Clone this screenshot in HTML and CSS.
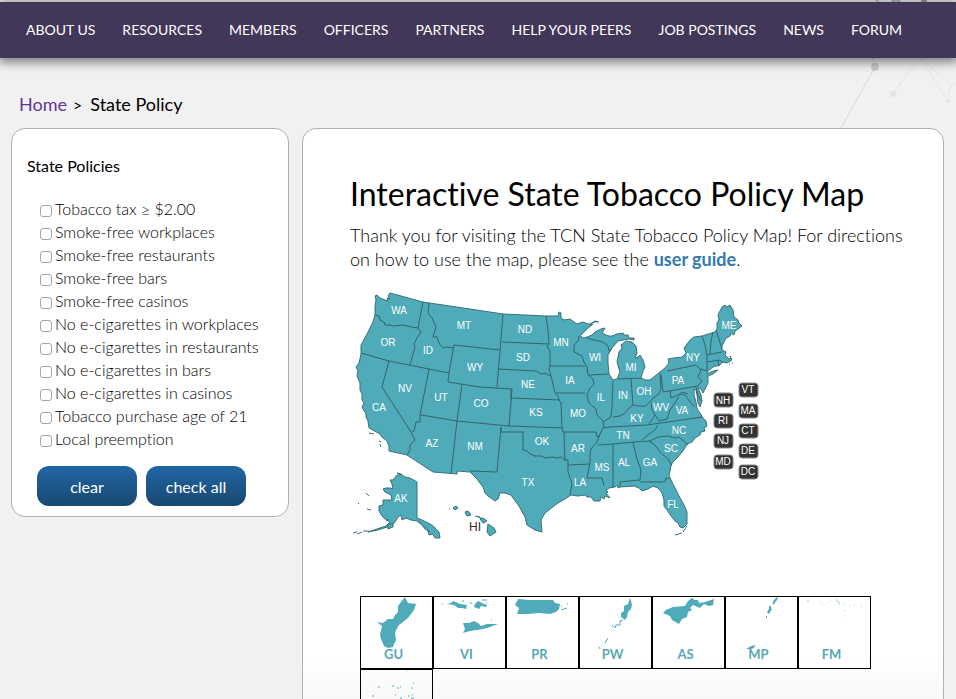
FILE: index.html
```html
<!DOCTYPE html>
<html lang="en">
<head>
<meta charset="utf-8">
<title>State Policy</title>
<link rel="stylesheet" href="styles.css">
</head>
<body>
<svg class="network" viewBox="0 0 120 130" width="120" height="130" aria-hidden="true">
  <g fill="none" stroke="#e6e6e8"><path d="M36 56 39 67 5 128" stroke="#dadadc"/><path d="M84 57 57 94M84 57 116 86M84 57 112 101"/><path d="M120 83Q112 86 112 96"/></g>
  <circle cx="39" cy="67" r="4" fill="#c9c9cd"/><circle cx="57" cy="94" r="3" fill="#dfe4e4"/><circle cx="112" cy="101" r="2" fill="#e4e4e4"/>
  <circle cx="60" cy="-1" r="5" fill="#a9c3cc"/><circle cx="88" cy="0" r="3" fill="#999"/><path d="M0 0l-6 0M40 0l3 2" stroke="#99a"/>
</svg>
<nav class="nav" aria-label="Main">
  <a href="#">ABOUT US</a><a href="#">RESOURCES</a><a href="#">MEMBERS</a><a href="#">OFFICERS</a><a href="#">PARTNERS</a><a href="#">HELP YOUR PEERS</a><a href="#">JOB POSTINGS</a><a href="#">NEWS</a><a href="#">FORUM</a>
</nav>
<div class="crumbs"><a href="#">Home</a><span class="sep">&gt;</span><span>State Policy</span></div>
<div class="columns">
  <aside class="panel filters">
    <h2>State Policies</h2>
    <form>
      <ul>
        <li><label><input type="checkbox">Tobacco tax ≥ $2.00</label></li>
        <li><label><input type="checkbox">Smoke-free workplaces</label></li>
        <li><label><input type="checkbox">Smoke-free restaurants</label></li>
        <li><label><input type="checkbox">Smoke-free bars</label></li>
        <li><label><input type="checkbox">Smoke-free casinos</label></li>
        <li><label><input type="checkbox">No e-cigarettes in workplaces</label></li>
        <li><label><input type="checkbox">No e-cigarettes in restaurants</label></li>
        <li><label><input type="checkbox">No e-cigarettes in bars</label></li>
        <li><label><input type="checkbox">No e-cigarettes in casinos</label></li>
        <li><label><input type="checkbox">Tobacco purchase age of 21</label></li>
        <li><label><input type="checkbox">Local preemption</label></li>
      </ul>
      <div class="actions"><button type="button">clear</button><button type="button">check all</button></div>
    </form>
  </aside>
  <main class="panel content">
    <h1>Interactive State Tobacco Policy Map</h1>
    <p>Thank you for visiting the TCN State Tobacco Policy Map! For directions on how to use the map, please see the <a href="#">user guide</a>.</p>
    <svg class="map" viewBox="350 285 420 260" width="420" height="260" role="img" aria-label="Map of the United States">
      <g class="land">
        <path d="M377 295l3 3 5 2 3 1-1-3 3 1-2-3 2-3L423 302 490 312 503 314 546 316 558 316 559 312 561 313 561 318 564 320 570 319 574 322 577 324 583 322 588 324 593 324 587 329 580 336 584 338 587 337 592 335 595 332 601 329 605 328 602 333 606 335 609 336 612 336 617 334 623 333 624 335 628 335 629 338 634 338 634 340 629 339 623 340 618 341 612 348 609 353 611 349 608 355 608 363 609 374 613 380 617 379 620 372 617 362 619 352 622 348 621 345 626 341 632 342 636 346 637 353 635 358 638 357 640 355 643 360 645 367 643 371 641 378 645 380 650 380 655 376 660 372 665 368 669 363 668 359 674 358 682 357 686 353 684 348 690 340 694 337 702 336 715 332 717 329 717 323 719 320 718 315 722 307 725 305 727 307 730 305 733 310 734 317 738 320 739 323 742 326 738 329 735 331 734 335 731 333 730 336 726 338 722 346 722 350 726 352 725 355 729 359 731 358 730 356 732 360 727 363 722 362 720 365 713 367 708 371 707 374 713 371 718 370 713 374 708 376 708 383 705 389 703 393 701 389 698 388 701 395 702 401 700 407 698 403 697 395 696 390 694 389 694 395 696 402 697 409 700 413 703 418 706 421 707 426 704 428 705 431 701 432 700 435 695 438 692 442 687 444 683 451 677 458 673 462 671 465 670 471 669 475 671 480 675 488 679 496 684 505 687 512 687 524 683 528 680 527 678 523 675 521 671 516 667 510 664 506 664 500 662 493 658 488 653 486 648 489 642 491 639 488 634 486 620 487 618 488 617 485 615 487 609 488 606 490 608 492 606 493 610 498 605 496 604 499 601 497 600 501 594 501 591 497 587 497 585 495 578 496 571 495 565 499 558 503 554 506 545 513 541 520 542 532 535 530 527 525 525 517 519 506 513 498 511 495 505 493 500 493 498 499 495 501 488 496 485 493 483 487 477 479 470 472 457 471 457 474 433 472 407 455 389 451 389 446 387 441 382 437 380 434 369 428 368 421 366 417 366 414 362 407 364 403 362 400 362 394 360 390 360 383 357 376 358 371 356 367 359 363 361 354 361 345 367 334 373 322 375 315 375 306 376 300 375 296Z"/>
        <path d="M397 473l4 1 4 3 5 1 7 4V518l5 2 8 4 3 2 6 6 1 6-5 0-2-4-4 1-2-7-5-3-5-4-6-1-5-2-4 2-1-5-3 2-3 5-4 4-7 2-6 2-10 2 9-3 9-3 4-4-5-3-3-3-3-5 0-5 4-1 0-5 9 0-1-5-6-3-2-3 3-1 4 0 3 1-1-5-2-4 3 0 4-5 4 0z"/>
        <path d="M353 533l4-1M357 534l5-2M363 531l6 0M366 493l3 3M358 503l1 1M367 509l4 1M388 525l5-2 0 4-5 2zM386 521l3-2M419 521l6 8 5 3M369 433l5 1M379 441l2 1M380 444l1 3M683 532l4-6M675 535l7-2M449 509l1 0M453 508l3-2 2 2-3 2zM465 512l3-1 3 4-4 1zM475 516l5 1 1 2M480 519l3-1 4 3-4 2zM488 524l6 4 2 4-6 4-3-4zM590 324l5-3 4 1M729 364h1M732 363h1"/>
      </g>
      <g class="borders">
        <path d="M375 315l4 1 1 4 4 2 1 3 5 0 3 1 10-1 8 2 7 1M423 302l-5 26 3 4-4 6-3 6 1 3-5 18M429 303l-1 10 4 5 4 9-3 10 4 0 2 6 4 5 3-1 7 1M454 345l-5 28-1 9 32 5 32 2M454 345l46 5M503 314l-6 73M361 353l28 8 20 4 40 8M389 361l-7 26 29 45 4 8-5 5 0 5-3 5M429 369l-9 46 0 7-4 0-2 9-2 1M421 415l36 6 52 5 54 2M462 384l-5 37-6 53M502 342l47 2M498 369l38 2 5 3 4-1 5 3M546 316l2 14 1 14-2 3 3 4 0 15-1 3 2 7 2 8 2 9 3 3 1 4 2 3 1 25 1 4M511 389l0 9 49 2M512 389l-3 37M511 398h-1M550 366h35M555 393l30 0M579 336l-1 5-4 4 0 7 8 4 2 6 3 5 1 8 5 4 1 5-4 4-3 7 2 8 7 6 1 6 6 6 1 5-4 8-3 8-6 7-1 6 0 7-1 6-2 10 15 0 2 8M589 375l20-1M587 338l7 2 9 2 5 4 1 5M613 381l-1 26-1 10-8 5M613 417l7-1 5-3 4-5 4-3 5 1 7 0 5-4 3-4 6-4 2-5-1-16M631 379l2 26M618 379l23-1M661 375l2 17 35-6 4-5-4-4 3-7-5-5-29 6M603 428l7-1 37-2 55-8M598 445l15-1 32-3M642 440l6-5 7-5 3-5M563 432l33 0 1 5 3-1M564 432l1 29M568 465l22-1M568 460l0 12 2 6 2 6-2 11M501 427v5l22 0v18l4 1 3 3 5 2 6 0 4 2 7-1 5 1 4-1 4 3 3 0M501 427l-4 45-27-1M613 444v43M633 442l4 17 4 11-1 10M620 487v-5l19-2 2 2 24 0 1-4 3 1M649 441l6 4 5 7 8 7 4 7M645 442l7-2 6-3 10-1 7 2 4-1 9 8M702 336l3 9 2 10 0 16-7-2M713 332l-2 9-1 13M707 355l15-3M716 330l6 19M707 362l13-2 3 3M718 360l1 6M696 387l2 8 3 6M651 403l1 7 3 5-6 9M655 415l4 6 8-2 3-9 5-7 4-7M670 391l1 7 9-4 5 1 3 4 3 4 4 4M679 395l3-3 6 2"/>
      </g>
      <g class="labels">
        <text x="399" y="314">WA</text><text x="388" y="346">OR</text><text x="428" y="354">ID</text><text x="464" y="329">MT</text><text x="475" y="371">WY</text><text x="525" y="333">ND</text><text x="523" y="361">SD</text><text x="528" y="388">NE</text><text x="561" y="346">MN</text><text x="595" y="361">WI</text><text x="570" y="384">IA</text><text x="601" y="401">IL</text><text x="623" y="399">IN</text><text x="631" y="371">MI</text><text x="644" y="395">OH</text><text x="678" y="384">PA</text><text x="693" y="361">NY</text><text x="729" y="329">ME</text><text x="405" y="392">NV</text><text x="441" y="401">UT</text><text x="481" y="407">CO</text><text x="379" y="411">CA</text><text x="536" y="416">KS</text><text x="578" y="417">MO</text><text x="637" y="422">KY</text><text x="661" y="411">WV</text><text x="682" y="414">VA</text><text x="623" y="439">TN</text><text x="679" y="434">NC</text><text x="671" y="452">SC</text><text x="432" y="447">AZ</text><text x="475" y="450">NM</text><text x="542" y="445">OK</text><text x="578" y="452">AR</text><text x="528" y="486">TX</text><text x="580" y="486">LA</text><text x="602" y="471">MS</text><text x="624" y="466">AL</text><text x="650" y="466">GA</text><text x="673" y="508">FL</text><text x="401" y="502">AK</text><text class="dark" x="475" y="531">HI</text>
      </g>
      <g class="badges">
        <rect x="714" y="393" width="19" height="14" rx="3"/><rect x="714" y="414" width="19" height="14" rx="3"/><rect x="714" y="434" width="19" height="14" rx="3"/><rect x="714" y="455" width="19" height="14" rx="3"/><rect x="739" y="383" width="19" height="14" rx="3"/><rect x="739" y="404" width="19" height="14" rx="3"/><rect x="739" y="424" width="19" height="14" rx="3"/><rect x="739" y="444" width="19" height="14" rx="3"/><rect x="739" y="465" width="19" height="14" rx="3"/>
      </g>
      <g class="labels">
        <text x="723" y="404">NH</text><text x="723" y="424">RI</text><text x="723" y="444">NJ</text><text x="723" y="465">MD</text><text x="748" y="393">VT</text><text x="748" y="414">MA</text><text x="748" y="434">CT</text><text x="748" y="454">DE</text><text x="748" y="475">DC</text>
      </g>
    </svg>
    <div class="tiles">
      <a class="tile" href="#"><svg viewBox="0 0 71 71"><path d="M44 0l3 6 8 1-2 6-3 4-3 4-5 4-4 3-3 5-1 4 1 6-2 4-1 3-5 1-4-2-3-7-1-4 2-9-5-4 6 1 5-4 5 0 2-4 3-3 0-6 3-4z"/></svg><span>GU</span></a>
      <a class="tile" href="#"><svg viewBox="0 0 71 71"><path d="M13 7l4-1 2-2 5 2 2 1 7 1-1 4-4-1-4 0-4-3zM40 10l1-3 3-3 4 2 5 2-1 2-5-1-2 3zM29 26l6 0 5-2 4 2 3 3 6-2 11 0-8 3-7 2-13 2-7 2 2-4z"/><path d="M8 7h1M28 4h2M37 5v2M48 3h5M52 6h1M57 23h1" class="specks"/></svg><span>VI</span></a>
      <a class="tile" href="#"><svg viewBox="0 0 71 71"><path d="M11 2l11 1 14 0 10 0 2 3 5 1-1 5-3 3-6 2-11-1-11 1-11 0 2-6-4-3z"/><path d="M54 13l6-2M60 7h1M54 9h1" class="specks"/></svg><span>PR</span></a>
      <a class="tile" href="#"><svg viewBox="0 0 71 71"><path d="M50 1l1 3 1 4-1 4-3 3-1 5-2 3-4-3 0-4 3-2 0-5 4-2z"/><path d="M43 23l-3 1 0 4-4 0-1 3-3-3M28 41l-3 5M19 50l1 2" class="specks"/></svg><span>PW</span></a>
      <a class="tile" href="#"><svg viewBox="0 0 71 71"><path d="M10 16l3-3 7-3 12-1 3-5 4-3 3 2 3 0 1 3 6-1 9-3-1 6-4 1-5-2-4 4-7-3-3 3 2 2-4 2-1 5-5 2-3 5-7-4-2-4z"/></svg><span>AS</span></a>
      <a class="tile" href="#"><svg viewBox="0 0 71 71"><path d="M52 0l-1 3-3 2-1 2 1-4zM44 8l0 3 2 1-3 5-2-2 2-3zM20 52l5-3 4-1-1 3-3 1z"/><path d="M51 1l-4 6M44 9v5M40 20h1" class="specks wide"/></svg><span>MP</span></a>
      <a class="tile" href="#"><svg viewBox="0 0 71 71"><path d="M9 2v3M20 5h1M23 7h1M29 5h1M32 3h1M38 2v3M40 4v4M44 7h1M45 13h1M45 19h1M50 9h1M55 8h1M62 10h1" class="specks faint"/></svg><span>FM</span></a>
      <a class="tile" href="#"><svg viewBox="0 0 71 71"><path d="M46 0h1M17 17h2M31 16h2M36 18h2M39 17h1M50 18h2M52 13h1M11 26h2M34 25h1M47 26h2M51 25h1M39 28h2M50 28h3" class="specks"/></svg><span>MH</span></a>
    </div>
  </main>
</div>
</body>
</html>
```
FILE: styles.css
```css
* { box-sizing: border-box; }
body {
  margin: 0;
  padding-top: 2px;
  background: #f1f1f1;
  color: #000;
  font-family: Lato, "Liberation Sans", sans-serif;
  font-size: 16px;
  font-variant-ligatures: none;
}
.network { position: absolute; top: 0; right: 0; z-index: -1; }
.nav {
  display: flex;
  gap: 27px;
  align-items: center;
  height: 56px;
  padding: 0 26px 2px;
  background: #433759;
  box-shadow: 0 2px 10px 2px rgba(0, 0, 0, .5);
}
.nav a { color: #fff; font-size: 14px; white-space: nowrap; text-decoration: none; }
.crumbs {
  display: flex;
  align-items: center;
  height: 70px;
  padding: 22px 19px 0;
  font-size: 18px;
}
.crumbs a { color: #663399; text-decoration: none; }
.crumbs .sep { padding: 0 8px 0 6px; font-size: 16px; }
.columns { display: flex; gap: 13px; align-items: flex-start; padding: 0 12px 24px 11px; }
.panel { border: 1px solid #b0b0b0; border-radius: 14px; background: #fff; }
.filters { flex: 0 0 278px; padding: 27px 15px 10px; }
.filters h2 { margin: 0; font-size: 16px; font-weight: 400; line-height: 20px; }
.filters ul { margin: 21px 0 0; padding: 0 0 0 13px; list-style: none; }
.filters li { line-height: 23px; font-weight: 300; white-space: nowrap; }
.filters label { display: flex; align-items: center; }
.filters input {
  appearance: none;
  width: 12px;
  height: 12px;
  margin: 4px 3px 0 0;
  border: 1px solid #a6a6a6;
  border-radius: 3px;
  background: #fff;
}
.filters input:checked { background: #1b62a0; }
.actions { display: flex; gap: 9px; margin: 16px 0 0 10px; }
.actions button {
  width: 100px;
  height: 40px;
  border: 0;
  border-radius: 12px;
  background: linear-gradient(#2066a5, #194870);
  color: #fff;
  font: 16px Lato, sans-serif;
}
.content { flex: 1; min-width: 0; padding: 43px 24px 48px 47px; background: linear-gradient(#fff 530px, #e8e8e8 100%); }
h1 { margin: 0; font-size: 32px; font-weight: 400; line-height: 44px; }
.content p { margin: 7px 0 14px; font-size: 18px; font-weight: 300; line-height: 24px; }
.content p a { color: #337ab0; font-weight: 700; text-decoration: none; }
.map { display: block; max-width: 100%; height: auto; }
.land path { fill: #4fabb9; stroke: #39717a; stroke-width: 1; stroke-linejoin: round; }
.borders path { fill: none; stroke: #34646c; stroke-width: 1; stroke-linejoin: round; }
.labels text { fill: #fff; font: 10px "Liberation Sans", sans-serif; text-anchor: middle; }
.labels .dark { fill: #332a2a; font-size: 12px; }
.badges rect { fill: #333; stroke: #888; stroke-width: 1; }
.tiles { display: flex; flex-wrap: wrap; margin: 51px 0 0 10px; }
.tile {
  display: grid;
  width: 73px;
  height: 73px;
  border: 1px solid #000;
  color: #5aa7b4;
  font-size: 13px;
  font-weight: 700;
  text-decoration: none;
}
.tile svg, .tile span { grid-area: 1 / 1; }
.tile svg { width: 100%; height: 100%; fill: #4fabb9; }
.tile span { align-self: end; padding: 0 6px 6px 0; text-align: center; }
.specks { fill: none; stroke: #4fabb9; stroke-width: 1; }
.wide { stroke-width: 2; }
.faint { opacity: .5; }
```
